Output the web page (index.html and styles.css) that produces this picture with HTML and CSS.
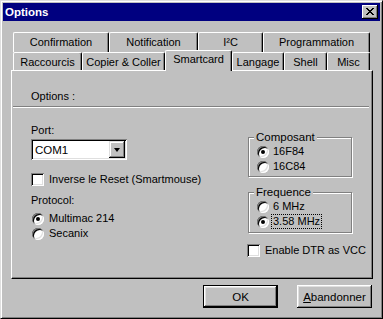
FILE: index.html
```html
<!DOCTYPE html>
<html lang="fr">
<head>
  <meta charset="UTF-8">
  <title>Options</title>
  <link rel="stylesheet" href="styles.css">
</head>
<body>
  <div class="window">
    <div class="titlebar">
      <span class="title">Options</span>
      <button class="close" type="button">
        <svg width="8" height="7" viewBox="0 0 8 7" shape-rendering="crispEdges">
          <path d="M0 0h2v1h1v1h2v-1h1v-1h2v1h-1v1h-1v1h-1v1h1v1h1v1h1v1h-2v-1h-1v-1h-2v1h-1v1h-2v-1h1v-1h1v-1h1v-1h-1v-1h-1v-1h-1z" fill="#000"/>
        </svg>
      </button>
    </div>

    <div class="tabs">
      <div class="tab-row">
        <div class="tab t-confirm">Confirmation</div>
        <div class="tab t-notif">Notification</div>
        <div class="tab t-i2c">I²C</div>
        <div class="tab t-prog">Programmation</div>
      </div>
      <div class="tab-row front">
        <div class="tab t-racc">Raccourcis</div>
        <div class="tab t-copier">Copier &amp; Coller</div>
        <div class="tab t-smart active">Smartcard</div>
        <div class="tab t-lang">Langage</div>
        <div class="tab t-shell">Shell</div>
        <div class="tab t-misc">Misc</div>
      </div>
    </div>

    <div class="panel">
      <div class="panel-head">Options :</div>
      <div class="separator"></div>
      <div class="panel-body">
        <div class="col-left">
          <div class="label">Port:</div>
          <div class="combo">
            <span class="combo-text">COM1</span>
            <span class="combo-btn"><span class="arrow"></span></span>
          </div>
          <div class="check-row reset">
            <span class="checkbox"></span>
            <span>Inverse le Reset (Smartmouse)</span>
          </div>
          <div class="label protocol">Protocol:</div>
          <div class="radio-list">
            <div class="radio-row"><span class="radio checked"></span><span>Multimac 214</span></div>
            <div class="radio-row"><span class="radio"></span><span>Secanix</span></div>
          </div>
        </div>

        <div class="col-right">
          <div class="group">
            <span class="group-label">Composant</span>
            <div class="radio-row"><span class="radio checked"></span><span>16F84</span></div>
            <div class="radio-row"><span class="radio"></span><span>16C84</span></div>
          </div>
          <div class="group freq">
            <span class="group-label">Frequence</span>
            <div class="radio-row"><span class="radio"></span><span>6 MHz</span></div>
            <div class="radio-row"><span class="radio checked"></span><span class="focus">3.58 MHz</span></div>
          </div>
          <div class="check-row dtr">
            <span class="checkbox"></span>
            <span>Enable DTR as VCC</span>
          </div>
        </div>
      </div>
    </div>

    <div class="buttons">
      <button class="btn default" type="button">OK</button>
      <button class="btn" type="button"><u>A</u>bandonner</button>
    </div>
  </div>
</body>
</html>
```

FILE: styles.css
```css
body {
  margin: 0;
  padding: 0;
  background-color: #c0c0c0;
  font-family: 'Liberation Sans', Arial, sans-serif;
  font-size: 11px;
  color: #000;
}
.window {
  width: 383px;
  height: 319px;
  box-sizing: border-box;
  background-color: #c0c0c0;
  border: 1px solid;
  border-color: #dfdfdf #000 #000 #dfdfdf;
  box-shadow: inset 1px 1px 0 #fff, inset -1px -1px 0 #808080;
  padding: 2px;
}
.titlebar {
  height: 18px;
  background-color: #000080;
  display: flex;
  align-items: center;
  justify-content: space-between;
}
.title {
  color: #fff;
  font-weight: bold;
  font-size: 11.5px;
  padding-left: 2px;
}
.close {
  width: 16px;
  height: 14px;
  margin-right: 2px;
  padding: 0;
  border: none;
  background-color: #c0c0c0;
  box-shadow: inset -1px -1px 0 #000, inset 1px 1px 0 #fff, inset -2px -2px 0 #808080;
  display: flex;
  align-items: center;
  justify-content: center;
}
.close svg {
  margin-left: -1px;
  margin-top: -1px;
}

/* onglets */
.tabs {
  margin-top: 11px;
  padding-left: 10px;
}
.tab-row {
  display: flex;
  height: 20px;
}
.tab-row.front {
  height: 18px;
  align-items: flex-end;
}
.tab {
  box-sizing: border-box;
  height: 100%;
  border-top: 1px solid #fff;
  border-left: 1px solid #fff;
  border-right: 1px solid #000;
  border-radius: 2px 2px 0 0;
  box-shadow: inset -1px 0 0 #808080;
  background-color: #c0c0c0;
  display: flex;
  justify-content: center;
  padding-top: 3px;
  line-height: 13px;
  white-space: nowrap;
}
.tab-row.front .tab {
  padding-top: 3px;
}
.tab-row.front .tab.active {
  height: 21px;
  margin-bottom: -1px;
  position: relative;
  z-index: 1;
  padding-top: 2px;
}
.t-confirm { width: 96px; }
.t-notif { width: 89px; }
.t-i2c { width: 65px; }
.t-prog { width: 107px; }
.t-racc { width: 69px; }
.t-copier { width: 83px; }
.t-smart { width: 67px; }
.t-lang { width: 52px; }
.t-shell { width: 43px; }
.t-misc { width: 43px; }

/* panneau */
.panel {
  box-sizing: border-box;
  height: 209px;
  margin: 0 7px 0 8px;
  border: 1px solid;
  border-color: #fff #000 #000 #fff;
  box-shadow: inset -1px -1px 0 #808080;
}
.panel-head {
  padding: 19px 0 0 19px;
  line-height: 13px;
}
.separator {
  margin: 3px 3px 0 1px;
  height: 1px;
  background-color: #808080;
  border-bottom: 1px solid #fff;
}
.panel-body {
  display: flex;
}
.col-left {
  box-sizing: border-box;
  width: 236px;
  padding: 16px 0 0 19px;
}
.col-right {
  width: 104px;
  padding-top: 29px;
}
.label {
  line-height: 13px;
}
.label.protocol {
  margin-top: 7px;
}
.combo {
  box-sizing: border-box;
  width: 96px;
  height: 21px;
  margin-top: 2px;
  background-color: #fff;
  box-shadow: inset 1px 1px 0 #808080, inset -1px -1px 0 #fff, inset 2px 2px 0 #000, inset -2px -2px 0 #dfdfdf;
  display: flex;
  align-items: center;
  justify-content: space-between;
  padding: 2px;
}
.combo-text {
  padding-left: 2px;
  font-size: 11.5px;
}
.combo-btn {
  box-sizing: border-box;
  width: 16px;
  height: 17px;
  background-color: #c0c0c0;
  box-shadow: inset -1px -1px 0 #000, inset 1px 1px 0 #dfdfdf, inset -2px -2px 0 #808080, inset 2px 2px 0 #fff;
  display: flex;
  align-items: center;
  justify-content: center;
}
.arrow {
  width: 0;
  height: 0;
  border-left: 3.5px solid transparent;
  border-right: 3.5px solid transparent;
  border-top: 4px solid #000;
  margin-left: -1px;
}
.check-row,
.radio-row {
  display: flex;
  align-items: center;
  height: 15px;
  line-height: 13px;
  white-space: nowrap;
}
.check-row.reset {
  margin-top: 12px;
}
.check-row.dtr {
  margin-top: 10px;
  margin-left: -1px;
}
.checkbox {
  box-sizing: border-box;
  flex: none;
  width: 13px;
  height: 13px;
  margin-right: 5px;
  background-color: #fff;
  box-shadow: inset 1px 1px 0 #808080, inset -1px -1px 0 #fff, inset 2px 2px 0 #000, inset -2px -2px 0 #dfdfdf;
}
.radio-list {
  margin-top: 4px;
  padding-left: 1px;
}
.radio {
  position: relative;
  flex: none;
  width: 12px;
  height: 12px;
  margin-right: 5px;
  border-radius: 50%;
  background-color: #fff;
  box-shadow: inset 1px 1px 0 #808080, inset -1px -1px 0 #fff, inset 2px 2px 0 #000, inset -2px -2px 0 #dfdfdf;
}
.radio.checked::after {
  content: "";
  position: absolute;
  left: 4px;
  top: 4px;
  width: 4px;
  height: 4px;
  border-radius: 50%;
  background-color: #000;
}
.group .radio {
  margin-right: 4px;
}
.group {
  box-sizing: border-box;
  width: 104px;
  border: 1px solid #808080;
  box-shadow: inset 1px 1px 0 #fff, 1px 1px 0 #fff;
  padding: 0 0 2px 8px;
}
.group.freq {
  margin-top: 15px;
  padding-bottom: 3px;
}
.group-label {
  display: block;
  width: fit-content;
  margin: -7px 0 0 -3px;
  padding: 0 2px;
  line-height: 13px;
  font-size: 11.5px;
  background-color: #c0c0c0;
}
.focus {
  outline: 1px dotted #000;
  padding: 0 1px;
  margin-left: -1px;
}

/* boutons */
.buttons {
  display: flex;
  justify-content: flex-end;
  gap: 19px;
  margin-top: 6px;
  padding-right: 8px;
}
.btn {
  box-sizing: border-box;
  width: 75px;
  height: 23px;
  padding: 0;
  border: none;
  background-color: #c0c0c0;
  font-family: 'Liberation Sans', Arial, sans-serif;
  font-size: 11.5px;
  color: #000;
  box-shadow: inset -1px -1px 0 #000, inset 1px 1px 0 #fff, inset -2px -2px 0 #808080, inset 2px 2px 0 #dfdfdf;
}
.btn.default {
  border: 1px solid #000;
}
```
